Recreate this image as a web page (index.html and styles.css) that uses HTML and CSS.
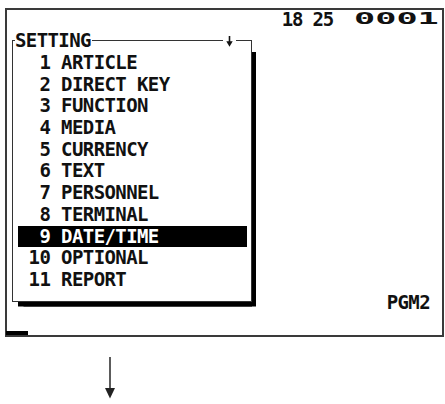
FILE: index.html
```html
<!DOCTYPE html>
<html>
<head>
<meta charset="utf-8">
<link rel="stylesheet" href="styles.css">
</head>
<body>
<div class="screen">
  <div class="status">
    <span class="clock">18 25</span>
    <span class="counter"><span class="wide">0001</span></span>
  </div>
  <div class="main">
    <div class="menu">
      <div class="menu-title">
        <span class="title-text">SETTING</span>
        <span class="title-fill"></span>
        <span class="title-arrow">
          <svg width="7" height="11" viewBox="0 0 7 11"><path d="M3.5 0V6" stroke="#111" stroke-width="1.6"/><path d="M0.3 5.2H6.7L3.5 10.8Z" fill="#111"/></svg>
        </span>
      </div>
      <div class="item"> 1 ARTICLE</div>
      <div class="item"> 2 DIRECT KEY</div>
      <div class="item"> 3 FUNCTION</div>
      <div class="item"> 4 MEDIA</div>
      <div class="item"> 5 CURRENCY</div>
      <div class="item"> 6 TEXT</div>
      <div class="item"> 7 PERSONNEL</div>
      <div class="item"> 8 TERMINAL</div>
      <div class="item selected"> 9 DATE/TIME</div>
      <div class="item">10 OPTIONAL</div>
      <div class="item">11 REPORT</div>
    </div>
    <div class="mode">PGM2</div>
  </div>
  <div class="cursor"></div>
</div>
<div class="next-arrow">
  <svg width="12" height="42" viewBox="0 0 12 42"><path d="M6 0V34" stroke="#333" stroke-width="1.6"/><path d="M1 31H11L6 41.5Z" fill="#222"/></svg>
</div>
</body>
</html>
```

FILE: styles.css
```css
html, body {
  margin: 0;
  padding: 0;
  background: #fff;
}
body {
  font-family: "DejaVu Sans Mono", "Liberation Mono", monospace;
  font-weight: bold;
  font-size: 19px;
  letter-spacing: -0.6px;
  color: #111;
}
.screen {
  margin: 8px 0 0 5px;
  width: 435px;
  height: 325px;
  border: 2px solid #3a3a3a;
  display: flex;
  flex-direction: column;
}
.status {
  height: 18px;
  line-height: 18px;
  display: flex;
  justify-content: flex-end;
  align-items: center;
  padding-right: 2px;
}
.clock {
  margin-right: 21px;
  letter-spacing: -1.2px;
}
.counter {
  display: inline-block;
  width: 86px;
  font-size: 16px;
  letter-spacing: 0;
  line-height: 18px;
}
.wide {
  display: inline-block;
  transform: scaleX(2.2);
  transform-origin: left center;
}
.main {
  flex: 1;
  display: flex;
  justify-content: space-between;
}
.menu {
  align-self: flex-start;
  margin: 12px 0 0 5px;
  width: 240px;
  box-sizing: border-box;
  border: 1px solid #333;
  padding-bottom: 10px;
  box-shadow: 7.75px 8.25px 0 -3.75px #000, 3px 7.5px 0 -3px #000;
}
.menu-title {
  display: flex;
  align-items: center;
  height: 21.7px;
  line-height: 21.7px;
  margin-top: -10.7px;
}
.title-text {
  background: #fff;
  margin-left: 2px;
  padding-right: 1px;
}
.title-fill {
  flex: 1;
}
.title-arrow {
  display: flex;
  justify-content: center;
  align-items: center;
  width: 13px;
  height: 12px;
  background: #fff;
  margin-right: 15px;
}
.item {
  white-space: pre;
  height: 21.7px;
  line-height: 21.7px;
  margin: 0 4px 0 5px;
  padding-left: 10.6px;
}
.item.selected {
  background: #000;
  color: #fff;
}
.mode {
  align-self: flex-end;
  line-height: 16px;
  margin: 0 12px 21px 0;
}
.cursor {
  width: 22px;
  height: 4px;
  margin-left: -1px;
  background: #000;
}
.next-arrow {
  margin: 20px 0 0 104px;
  height: 42px;
}
.next-arrow svg {
  display: block;
}
```
